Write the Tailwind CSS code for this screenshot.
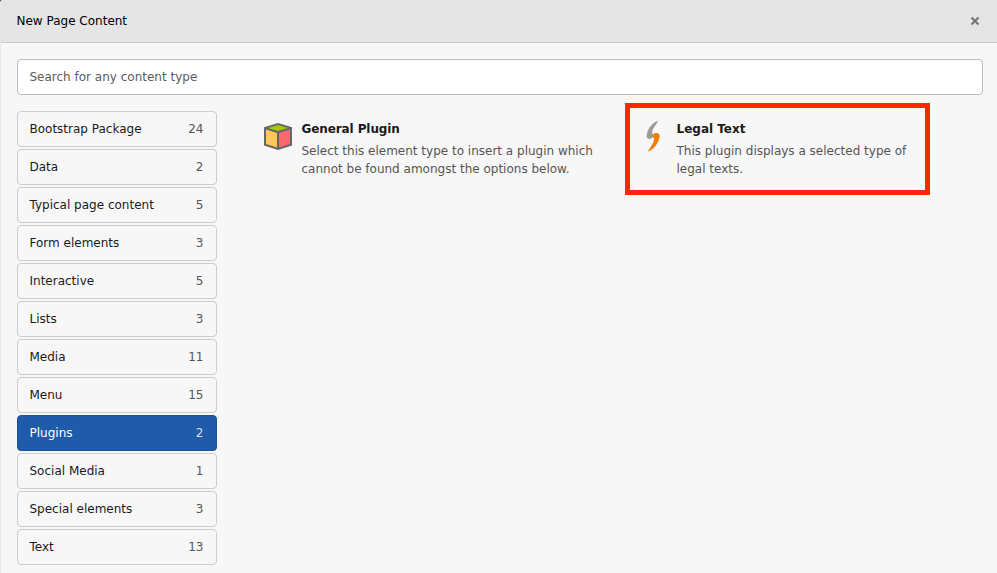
<!DOCTYPE html>
<html lang="en">
<head>
<meta charset="utf-8">
<title>New Page Content</title>
<script src="https://cdn.jsdelivr.net/npm/@tailwindcss/browser@4"></script>
</head>
<body class="h-[573px] overflow-hidden bg-[#444] font-['DejaVu_Sans',sans-serif] text-[12px] leading-[18px] text-[#1a1a1a]">
<div class="flex h-full flex-col overflow-hidden rounded-tl-[3px] border-l border-[#e8e8e8] bg-[#f7f7f7]">
  <header class="flex h-[43px] shrink-0 items-center justify-between border-b border-[#c9c9c9] bg-[#e5e5e5] pl-[15.5px] pr-[17px]">
    <h1 class="text-black">New Page Content</h1>
    <button class="flex size-[10px] items-center justify-center" aria-label="Close">
      <svg class="size-[10px]" viewBox="0 0 10 10" fill="none" stroke="#737373" stroke-width="2.1"><path d="M1.500 1.500 8.500 8.500M8.500 1.500 1.500 8.500"/></svg>
    </button>
  </header>
  <main class="flex flex-col gap-4 pt-4 pr-[14px] pl-4">
    <input type="text" placeholder="Search for any content type" class="h-9 w-full rounded-[4px] border border-[#bbb] bg-white px-[11.5px] placeholder:text-[#5c5c5c]">
    <div class="flex">
      <nav class="flex w-[200px] shrink-0 flex-col gap-[2px]">
        <a class="flex h-9 items-center justify-between rounded-[4px] border border-[#ccc] pl-[11.5px] pr-[12.5px]"><span>Bootstrap Package</span><span class="text-[#555]">24</span></a>
        <a class="flex h-9 items-center justify-between rounded-[4px] border border-[#ccc] pl-[11.5px] pr-[12.5px]"><span>Data</span><span class="text-[#555]">2</span></a>
        <a class="flex h-9 items-center justify-between rounded-[4px] border border-[#ccc] pl-[11.5px] pr-[12.5px]"><span>Typical page content</span><span class="text-[#555]">5</span></a>
        <a class="flex h-9 items-center justify-between rounded-[4px] border border-[#ccc] pl-[11.5px] pr-[12.5px]"><span>Form elements</span><span class="text-[#555]">3</span></a>
        <a class="flex h-9 items-center justify-between rounded-[4px] border border-[#ccc] pl-[11.5px] pr-[12.5px]"><span>Interactive</span><span class="text-[#555]">5</span></a>
        <a class="flex h-9 items-center justify-between rounded-[4px] border border-[#ccc] pl-[11.5px] pr-[12.5px]"><span>Lists</span><span class="text-[#555]">3</span></a>
        <a class="flex h-9 items-center justify-between rounded-[4px] border border-[#ccc] pl-[11.5px] pr-[12.5px]"><span>Media</span><span class="text-[#555]">11</span></a>
        <a class="flex h-9 items-center justify-between rounded-[4px] border border-[#ccc] pl-[11.5px] pr-[12.5px]"><span>Menu</span><span class="text-[#555]">15</span></a>
        <a class="flex h-9 items-center justify-between rounded-[4px] border border-[#1b5196] bg-[#205bab] pl-[11.5px] pr-[12.5px] text-white"><span>Plugins</span><span class="text-[#d2deee]">2</span></a>
        <a class="flex h-9 items-center justify-between rounded-[4px] border border-[#ccc] pl-[11.5px] pr-[12.5px]"><span>Social Media</span><span class="text-[#555]">1</span></a>
        <a class="flex h-9 items-center justify-between rounded-[4px] border border-[#ccc] pl-[11.5px] pr-[12.5px]"><span>Special elements</span><span class="text-[#555]">3</span></a>
        <a class="flex h-9 items-center justify-between rounded-[4px] border border-[#ccc] pl-[11.5px] pr-[12.5px]"><span>Text</span><span class="text-[#555]">13</span></a>
      </nav>
      <section class="flex items-start pl-[45px]">
        <article class="flex w-[363px] gap-[7.5px] pt-[9px]">
          <svg class="mt-px h-[32px] w-[32px] shrink-0" viewBox="0 0 32 32">
            <path fill="#666" d="M16 2 30 6.2V24.5L16 29 2 24.5V6.2Z"/>
            <path fill="#a4c900" d="M16 4 26.2 7 16 10.1 5.8 7Z"/>
            <path fill="#ffc857" d="M4 8.600 15 11.9V26.6L4 23.1Z"/>
            <path fill="#ff6770" d="M28 8.600 17 11.9V26.6L28 23.1Z"/>
          </svg>
          <div>
            <h2 class="mb-1 font-bold tracking-[-0.1px] text-[#1a1a1a]">General Plugin</h2>
            <p class="whitespace-nowrap text-[#555]">Select this element type to insert a plugin which<br>cannot be found amongst the options below.</p>
          </div>
        </article>
        <article class="-mt-2 flex h-[92px] w-[305px] gap-[8.5px] border-[5px] border-[#ff2600] pt-[12px] pl-[6px]">
          <svg class="h-[34px] w-[32px] shrink-0" viewBox="0 0 32 34">
            <path fill="#9c9c9c" d="M22.200 .8C17 2.200 12.400 7.500 10.800 14.200 10.100 17 11 18.800 13.200 18.900 15.500 19 17.200 17.700 17.200 15.500 17.200 14 16.200 13.600 16 12.500 16.400 8.500 20 5.500 22.200 .8Z"/>
            <path fill="#f07c00" d="M12 31.500C17.500 29.800 22 23.800 23.500 17.500 24.200 14.500 23 12.900 20.500 12.900 18 12.900 16.500 14.500 16.800 16.400 17.100 17.600 18.100 18 18.100 19.200 18.100 22.500 14.200 27 12 31.500Z"/>
          </svg>
          <div>
            <h2 class="mb-1 font-bold text-[#1a1a1a]">Legal Text</h2>
            <p class="whitespace-nowrap text-[#555]">This plugin displays a selected type of<br>legal texts.</p>
          </div>
        </article>
      </section>
    </div>
  </main>
</div>
</body>
</html>
